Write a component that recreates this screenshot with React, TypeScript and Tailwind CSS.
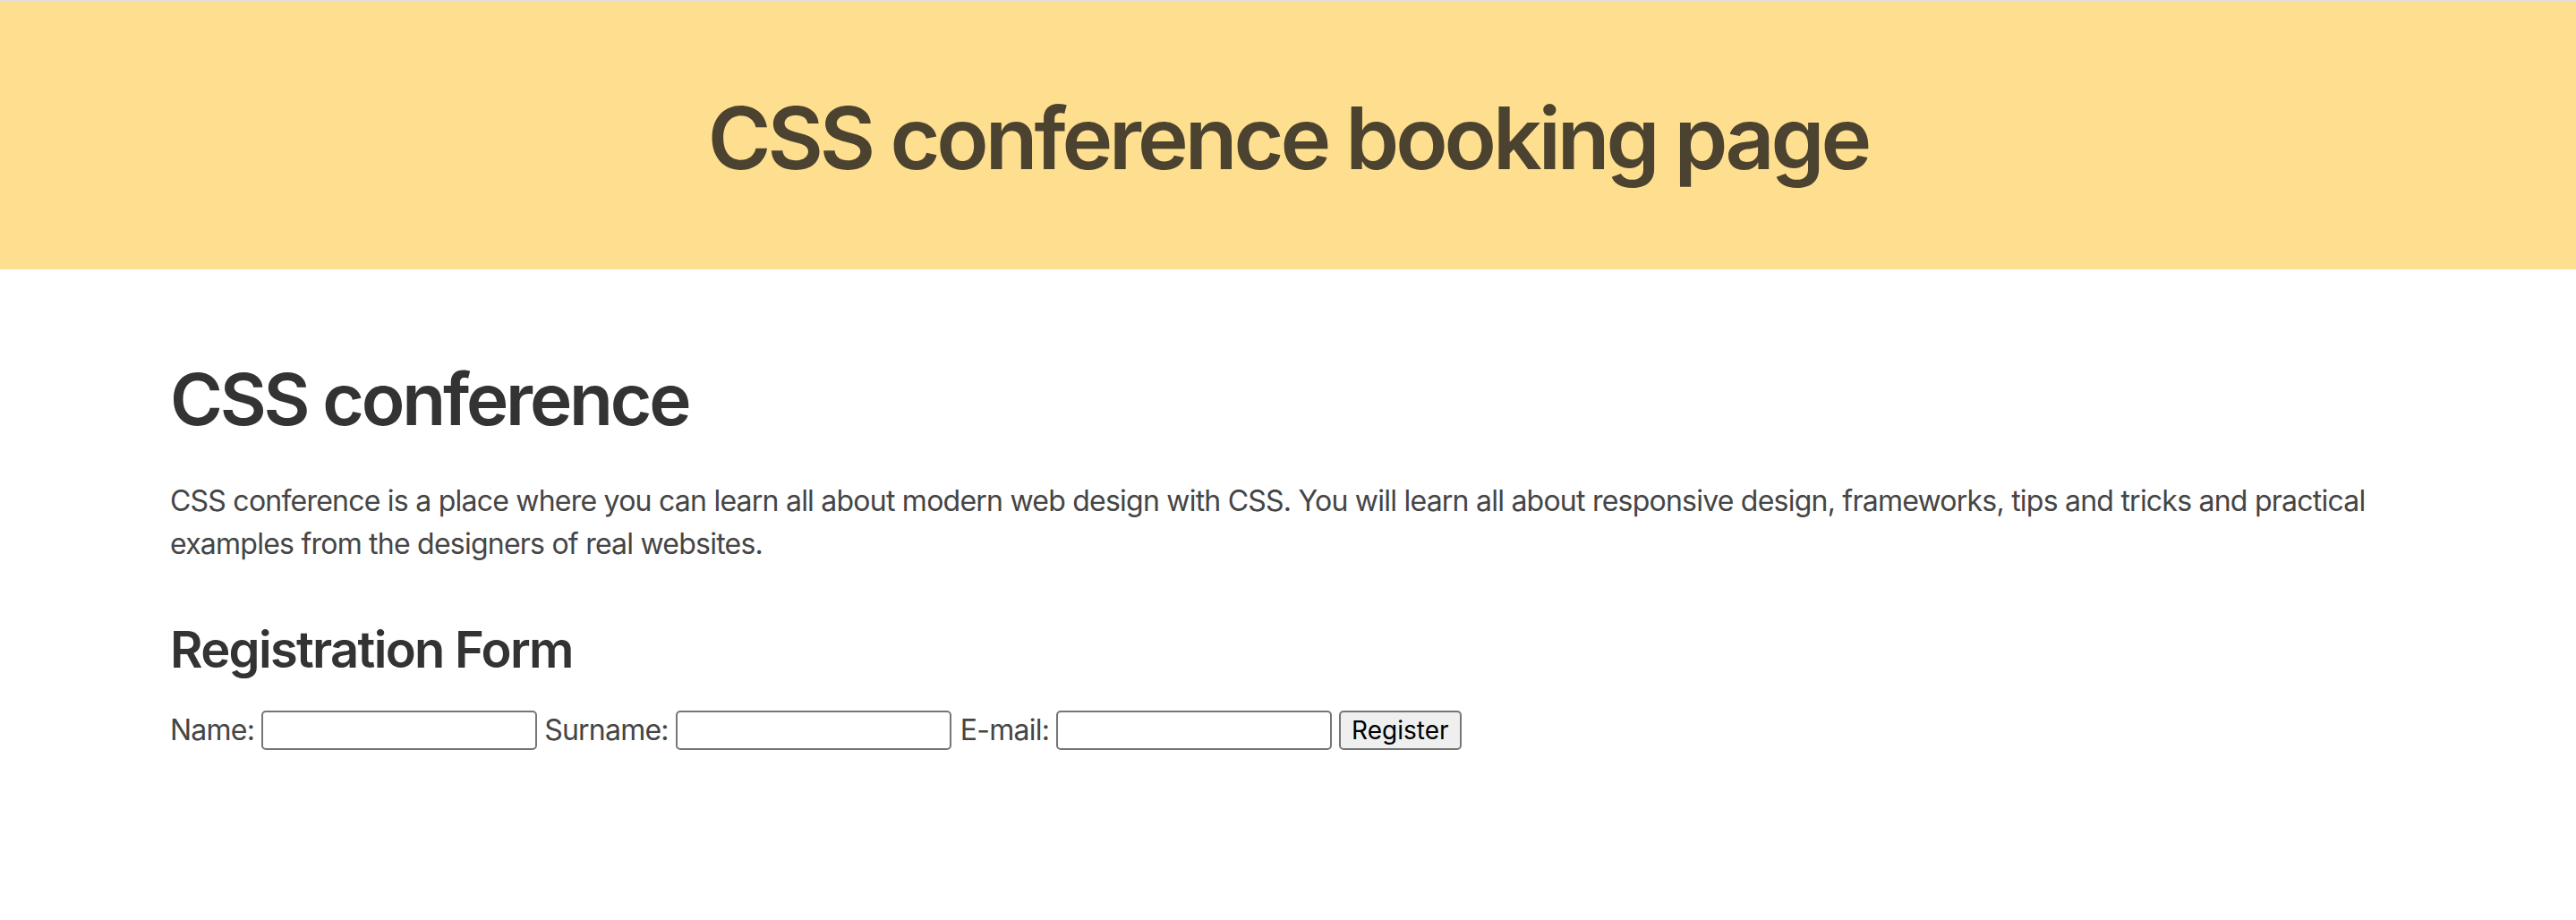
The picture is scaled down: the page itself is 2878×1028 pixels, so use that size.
import React from 'react';

const font = { fontFamily: 'Inter, "Noto Sans", sans-serif' };

export default function App() {
  return (
    <div className="min-h-screen bg-white" style={font}>
      <div className="h-[2px] bg-[#dedede]" />
      <header className="flex h-[299px] items-center justify-center bg-[#fede8f] pt-[6px]">
        <h1 className="text-[96px] font-semibold leading-[1.2] tracking-[-0.042em] text-[#4b4330]">
          CSS conference booking page
        </h1>
      </header>

      <main className="px-[190px]">
        <h2 className="mt-[97px] text-[80px] font-semibold leading-[96px] tracking-[-0.04em] text-[#333333]">
          CSS conference
        </h2>
        <p className="mt-[42px] text-[32px] leading-[48px] tracking-[-0.024em] text-[#454545]">
          CSS conference is a place where you can learn all about modern web design with CSS. You will learn all about
          responsive design, frameworks, tips and tricks and practical examples from the designers of real websites.
        </p>

        <h3 className="mt-[62px] text-[56px] font-semibold leading-[64px] tracking-[-0.03em] text-[#333333]">
          Registration Form
        </h3>
        <form
          className="mt-[34px] flex items-center gap-[8px] text-[32px] leading-[48px] tracking-[-0.024em] text-[#454545]"
          onSubmit={(e) => e.preventDefault()}
        >
          <label htmlFor="name">Name:</label>
          <input id="name" type="text" className="h-[44px] w-[308px] rounded-[5px] border-2 border-[#767676] bg-white" />
          <label htmlFor="surname">Surname:</label>
          <input id="surname" type="text" className="h-[44px] w-[308px] rounded-[5px] border-2 border-[#767676] bg-white" />
          <label htmlFor="email" className="pl-[2px]">E-mail:</label>
          <input id="email" type="email" className="h-[44px] w-[308px] rounded-[5px] border-2 border-[#767676] bg-white" />
          <button
            type="submit"
            className="h-[44px] rounded-[5px] border-2 border-[#767676] bg-[#efefef] px-[12px] text-[28px] leading-none tracking-normal text-black"
          >
            Register
          </button>
        </form>
      </main>
    </div>
  );
}
